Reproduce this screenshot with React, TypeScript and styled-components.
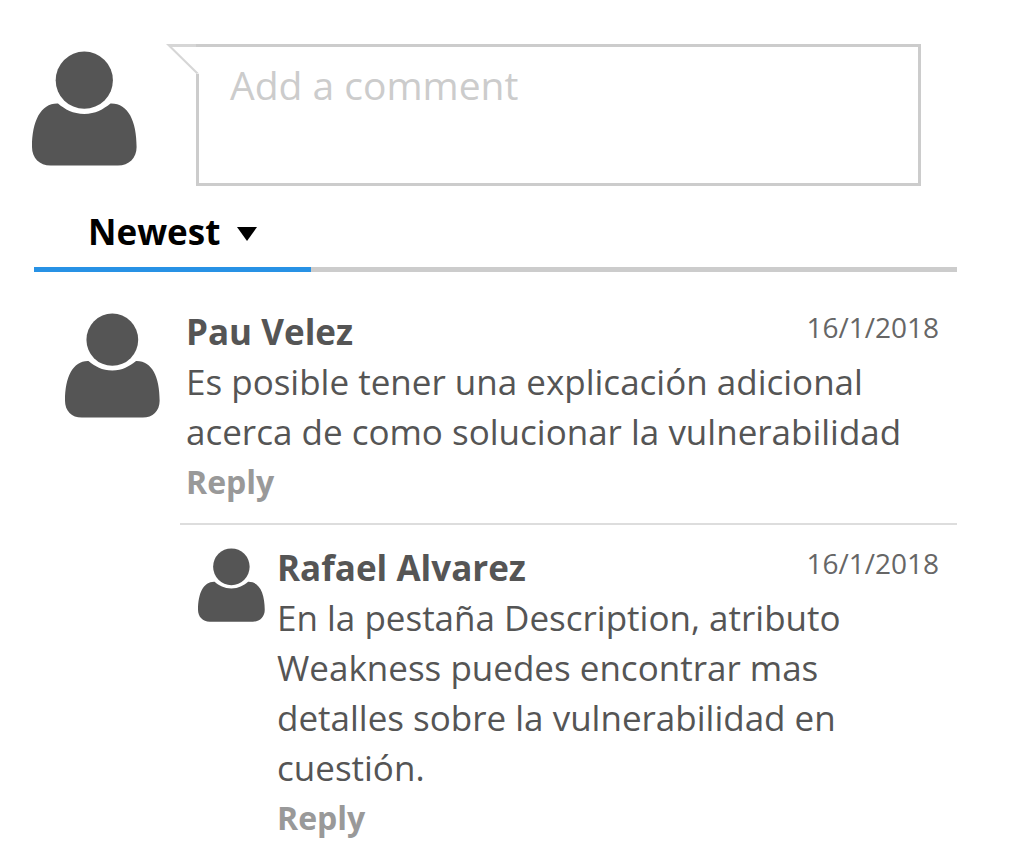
import React, { useState } from "react";
import styled, { createGlobalStyle } from "styled-components";

const GlobalStyle = createGlobalStyle`
  * { box-sizing: border-box; }
  body {
    margin: 0;
    background: #fff;
    color: #555;
    font-family: "Open Sans", "Noto Sans", sans-serif;
  }
`;

const Page = styled.main`
  padding: 44px 68px 0 32px;
`;

const Composer = styled.form`
  display: flex;
  align-items: flex-start;
  padding-right: 36px;
`;

const AvatarIcon = styled.svg<{ $width: number; $height: number }>`
  display: block;
  flex: none;
  width: ${(p) => p.$width}px;
  height: ${(p) => p.$height}px;
  fill: #555;
`;

const ComposerAvatar = styled.div`
  flex: none;
  width: 164px;
  padding-top: 7px;
`;

const Bubble = styled.div`
  position: relative;
  flex: 1;
  min-width: 0;
`;

const BubbleTail = styled.svg`
  position: absolute;
  left: -30px;
  top: 0;
  width: 33px;
  height: 30px;
`;

const CommentInput = styled.textarea`
  display: block;
  width: 100%;
  height: 142px;
  padding: 11px 31px;
  border: 3px solid #ccc;
  border-radius: 0;
  outline: none;
  resize: none;
  background: #fff;
  color: #555;
  font: 400 39px/54px "Open Sans", "Noto Sans", sans-serif;
  &::placeholder { color: #ccc; opacity: 1; }
`;

const SortBar = styled.div`
  margin: 16px 0 0 2px;
  border-bottom: 5px solid #ccc;
`;

const SortTab = styled.button`
  display: flex;
  align-items: center;
  gap: 17px;
  width: 30%;
  height: 70px;
  margin-bottom: -5px;
  padding: 0 0 6px 54px;
  border: 0;
  border-bottom: 5px solid #2892e5;
  background: none;
  color: #000;
  font: 700 35px/50px "Open Sans", "Noto Sans", sans-serif;
`;

const Caret = styled.svg`
  width: 20px;
  height: 14px;
  margin-top: 4px;
`;

const CommentRow = styled.article<{ $nested?: boolean }>`
  display: flex;
  align-items: flex-start;
  gap: ${(p) => (p.$nested ? 12 : 26)}px;
  margin-left: ${(p) => (p.$nested ? 148 : 33)}px;
  padding: ${(p) => (p.$nested ? "18px 0 0 18px" : "35px 0 16px")};
  border-top: ${(p) => (p.$nested ? "2px solid #ddd" : "0")};
`;

const AvatarSlot = styled.div<{ $nested?: boolean }>`
  flex: none;
  padding-top: ${(p) => (p.$nested ? 5 : 6)}px;
`;

const Body = styled.div`
  flex: 1;
  min-width: 0;
`;

const Header = styled.header`
  display: flex;
  justify-content: space-between;
  padding-right: 18px;
`;

const Author = styled.h2`
  margin: 0;
  font-size: 35px;
  line-height: 50px;
  font-weight: 700;
`;

const Posted = styled.time`
  font-size: 28px;
  line-height: 40px;
  color: #666;
`;

const Message = styled.p`
  margin: 0;
  padding-right: 40px;
  font-size: 35px;
  line-height: 50px;
`;

const Reply = styled.button`
  display: block;
  padding: 0;
  border: 0;
  background: none;
  color: #999;
  font: 700 32px/50px "Open Sans", "Noto Sans", sans-serif;
`;

function Avatar({ width, height }: { width: number; height: number }) {
  return (
    <AvatarIcon $width={width} $height={height} viewBox="0 0 105 115" preserveAspectRatio="none" aria-hidden="true">
      <circle cx="52.3" cy="29.2" r="28.6" />
      <path d="M26 52.600C33 58.500 41 63 52.300 63S71 58.500 78.500 52.600C96 52 104.600 70 104.600 96C104.600 107 97 114.500 86 114.500H18.500C7.500 114.500 0 107 0 96C0 70 9 52 26 52.600Z" />
    </AvatarIcon>
  );
}

interface CommentProps {
  author: string;
  date: string;
  text: string;
  nested?: boolean;
}

function Comment({ author, date, text, nested }: CommentProps) {
  return (
    <CommentRow $nested={nested}>
      <AvatarSlot $nested={nested}>
        <Avatar width={nested ? 67 : 95} height={nested ? 74 : 105} />
      </AvatarSlot>
      <Body>
        <Header>
          <Author>{author}</Author>
          <Posted>{date}</Posted>
        </Header>
        <Message>{text}</Message>
        <Reply type="button">Reply</Reply>
      </Body>
    </CommentRow>
  );
}

export default function App() {
  const [draft, setDraft] = useState("");
  return (
    <>
      <GlobalStyle />
      <Page>
        <Composer>
          <ComposerAvatar>
            <Avatar width={105} height={115} />
          </ComposerAvatar>
          <Bubble>
            <CommentInput
              aria-label="Add a comment"
              placeholder="Add a comment"
              value={draft}
              onChange={(e) => setDraft(e.target.value)}
            />
            <BubbleTail viewBox="0 0 33 30" aria-hidden="true">
              <path d="M5 3H33V30H31Z" fill="#fff" />
              <path d="M0 0H30V3H6L33 29.500H30Z" fill="#d6d6d6" />
            </BubbleTail>
          </Bubble>
        </Composer>
        <SortBar>
          <SortTab type="button" aria-haspopup="listbox">
            Newest
            <Caret viewBox="0 0 20 14" aria-hidden="true">
              <path d="M0 0H20L10 14Z" />
            </Caret>
          </SortTab>
        </SortBar>
        <Comment
          author="Pau Velez"
          date="16/1/2018"
          text="Es posible tener una explicación adicional acerca de como solucionar la vulnerabilidad"
        />
        <Comment
          nested
          author="Rafael Alvarez"
          date="16/1/2018"
          text="En la pestaña Description, atributo Weakness puedes encontrar mas detalles sobre la vulnerabilidad en cuestión."
        />
      </Page>
    </>
  );
}
